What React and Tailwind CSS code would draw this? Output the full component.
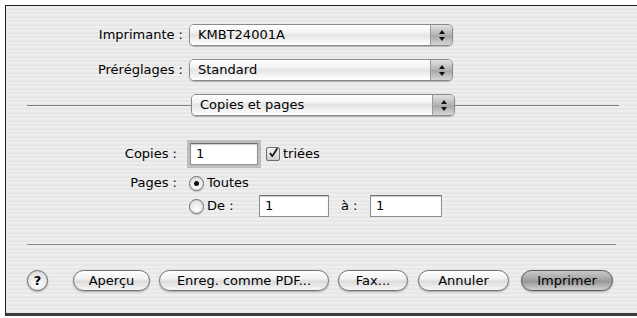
import React from 'react';

const font = "font-['Lucida_Grande','DejaVu_Sans','Liberation_Sans',sans-serif]";

const Arrows = () => (
  <svg width="8" height="13" viewBox="0 0 8 13">
    <polygon points="4,1 7,5 1,5" fill="#111" />
    <polygon points="1,8 7,8 4,12" fill="#111" />
  </svg>
);

const Popup = ({ label }) => (
  <div className="flex h-[22px] w-[264px] items-stretch overflow-hidden rounded-[5px] border border-[#8a8a8a] shadow-[0_1px_1px_rgba(0,0,0,0.25)]">
    <div className="flex flex-1 items-center bg-[linear-gradient(180deg,#ffffff_0%,#f4f4f4_35%,#e4e4e4_50%,#f2f2f2_75%,#ffffff_100%)] pl-[8px] text-[13px] text-black">
      {label}
    </div>
    <div className="flex w-[22px] items-center justify-center border-l border-[#9a9a9a] bg-[linear-gradient(180deg,#e2e2e2_0%,#b8b8b8_45%,#a8a8a8_55%,#d6d6d6_100%)]">
      <Arrows />
    </div>
  </div>
);

const Field = ({ value, w, focus }) => (
  <div
    className={`flex h-[22px] items-center border border-[#8f8f8f] border-t-[#6d6d6d] bg-white pl-[5px] text-[13px] shadow-[inset_0_1px_1px_rgba(0,0,0,0.2)] ${w} ${
      focus ? 'outline-[3px] outline-solid outline-[#a9a9a9]/70' : ''
    }`}
  >
    {value}
  </div>
);

const Radio = ({ on }) => (
  <div className="flex h-[15px] w-[15px] items-center justify-center rounded-full border border-[#6f6f6f] bg-[radial-gradient(circle_at_50%_70%,#ffffff_0%,#e8e8e8_60%,#c8c8c8_100%)] shadow-[0_1px_1px_rgba(0,0,0,0.2)]">
    {on && <div className="h-[5px] w-[5px] rounded-full bg-[#111]" />}
  </div>
);

const Button = ({ children, w, primary }) => (
  <div
    className={`flex h-[21px] items-center justify-center rounded-full border text-[13px] text-black shadow-[0_1px_2px_rgba(0,0,0,0.3)] ${w} ${
      primary
        ? 'border-[#555] bg-[linear-gradient(180deg,#c9c9c9_0%,#a4a4a4_45%,#969696_55%,#d2d2d2_100%)]'
        : 'border-[#707070] bg-[linear-gradient(180deg,#ffffff_0%,#f2f2f2_40%,#dcdcdc_55%,#f6f6f6_100%)]'
    }`}
  >
    {children}
  </div>
);

export default function App() {
  return (
    <div className={`h-[318px] w-[637px] bg-white pl-[5px] pt-[5px] ${font}`}>
      <div className="flex h-[311px] w-[632px] flex-col border-l border-t border-b-[3px] border-[#1e1e1e] border-b-[#3a3a3a] bg-[repeating-linear-gradient(180deg,#eeeeee_0px,#eeeeee_2px,#e7e7e7_2px,#e7e7e7_4px)] text-[13px] text-black">
        {/* printer & presets */}
        <div className="mt-[18px] flex items-center">
          <div className="w-[177px] text-right">Imprimante :</div>
          <div className="ml-[6px]">
            <Popup label="KMBT24001A" />
          </div>
        </div>
        <div className="mt-[13px] flex items-center">
          <div className="w-[177px] text-right">Préréglages :</div>
          <div className="ml-[6px]">
            <Popup label="Standard" />
          </div>
        </div>
        <div className="mt-[13px] flex items-center pl-[21px] pr-[18px]">
          <div className="h-px flex-1 bg-[#808080]" />
          <Popup label="Copies et pages" />
          <div className="h-px flex-1 bg-[#808080]" />
        </div>

        {/* copies & pages */}
        <div className="mt-[27px] flex items-center">
          <div className="w-[171px] text-right">Copies :</div>
          <div className="ml-[13px]">
            <Field value="1" w="w-[68px]" focus />
          </div>
          <div className="ml-[8px] flex items-center">
            <div className="flex h-[14px] w-[14px] items-center justify-center rounded-[2px] border border-[#6f6f6f] bg-[linear-gradient(180deg,#f4f4f4,#cfcfcf)]">
              <svg width="14" height="14" viewBox="0 0 14 14" className="-mt-[2px] ml-[1px]">
                <path d="M2.5 7 L5.5 11 L12 1" fill="none" stroke="#111" strokeWidth="2.2" strokeLinejoin="round" />
              </svg>
            </div>
            <span className="ml-[3px]">triées</span>
          </div>
        </div>
        <div className="mt-[7px] flex">
          <div className="flex h-[22px] w-[171px] items-center justify-end">Pages :</div>
          <div className="ml-[12px] flex flex-col gap-[1px]">
            <div className="flex h-[22px] items-center">
              <Radio on />
              <span className="ml-[3px]">Toutes</span>
            </div>
            <div className="flex items-center">
              <Radio />
              <span className="ml-[3px] w-[52px]">De :</span>
              <Field value="1" w="w-[70px]" />
              <span className="ml-[12px] w-[29px]">à :</span>
              <Field value="1" w="w-[72px]" />
            </div>
          </div>
        </div>

        <div className="mx-[21px] mt-[27px] h-px bg-[#8a8a8a]" />

        {/* buttons */}
        <div className="mt-[25px] flex items-center pl-[21px]">
          <div className="flex h-[21px] w-[21px] items-center justify-center rounded-full border border-[#6a6a6a] bg-[radial-gradient(circle_at_50%_70%,#ffffff_0%,#e6e6e6_60%,#c4c4c4_100%)] text-[13px] font-bold shadow-[0_1px_2px_rgba(0,0,0,0.3)]">
            ?
          </div>
          <div className="ml-[25px]">
            <Button w="w-[77px]">Aperçu</Button>
          </div>
          <div className="ml-[9px]">
            <Button w="w-[170px]">Enreg. comme PDF...</Button>
          </div>
          <div className="ml-[9px]">
            <Button w="w-[70px]">Fax...</Button>
          </div>
          <div className="ml-[10px]">
            <Button w="w-[91px]">Annuler</Button>
          </div>
          <div className="ml-[12px]">
            <Button w="w-[92px]" primary>Imprimer</Button>
          </div>
        </div>
      </div>
    </div>
  );
}
